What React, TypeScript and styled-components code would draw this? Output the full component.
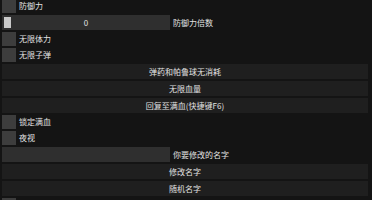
import React from "react";
import styled, { createGlobalStyle } from "styled-components";

const Global = createGlobalStyle`
  html, body { margin: 0; padding: 0; background: #141414; }
  body { width: 372px; height: 200px; overflow: hidden; }
`;

const Panel = styled.div`
  width: 372px;
  height: 200px;
  overflow: hidden;
  background: #141414;
  box-sizing: border-box;
  padding: 0 4px 0 2px;
  font-family: "Noto Sans CJK SC", "Liberation Sans", sans-serif;
  font-size: 8px;
  color: #e2e2e2;
`;

const List = styled.div`
  display: flex;
  flex-direction: column;
  gap: 2px;
  margin-top: -1px;
`;

const CheckRow = styled.div`
  display: flex;
  align-items: center;
  gap: 3px;
  height: 14px;
`;

const Box = styled.div`
  width: 14px;
  height: 14px;
  background: #3d3d3d;
  flex: none;
`;

const Label = styled.span`
  line-height: 14px;
  white-space: nowrap;
`;

const FieldRow = styled.div`
  display: flex;
  align-items: center;
  gap: 3px;
  height: 15px;
`;

const Frame = styled.div`
  position: relative;
  width: 168px;
  height: 15px;
  background: #2f2f2f;
  flex: none;
  display: flex;
  align-items: center;
  justify-content: center;
`;

const Grab = styled.div`
  position: absolute;
  left: 2px;
  top: 2px;
  width: 7px;
  height: 11px;
  background: #c9c9c9;
`;

const Button = styled.div`
  height: 15px;
  background: #1f1f1f;
  display: flex;
  align-items: center;
  justify-content: center;
  white-space: nowrap;
`;

const checks1 = ["无限体力", "无限子弹"];
const buttons1 = ["弹药和帕鲁球无消耗", "无限血量", "回复至满血(快捷键F6)"];
const checks2 = ["锁定满血", "夜视"];
const buttons2 = ["修改名字", "随机名字"];

export default function App() {
  return (
    <>
      <Global />
      <Panel>
        <List>
          <CheckRow>
            <Box />
            <Label>防御力</Label>
          </CheckRow>
          <FieldRow>
            <Frame>
              <Grab />
              0
            </Frame>
            <Label>防御力倍数</Label>
          </FieldRow>
          {checks1.map((c) => (
            <CheckRow key={c}>
              <Box />
              <Label>{c}</Label>
            </CheckRow>
          ))}
          {buttons1.map((b) => (
            <Button key={b}>{b}</Button>
          ))}
          {checks2.map((c) => (
            <CheckRow key={c}>
              <Box />
              <Label>{c}</Label>
            </CheckRow>
          ))}
          <FieldRow>
            <Frame />
            <Label>你要修改的名字</Label>
          </FieldRow>
          {buttons2.map((b) => (
            <Button key={b}>{b}</Button>
          ))}
          <CheckRow>
            <Box />
          </CheckRow>
        </List>
      </Panel>
    </>
  );
}
